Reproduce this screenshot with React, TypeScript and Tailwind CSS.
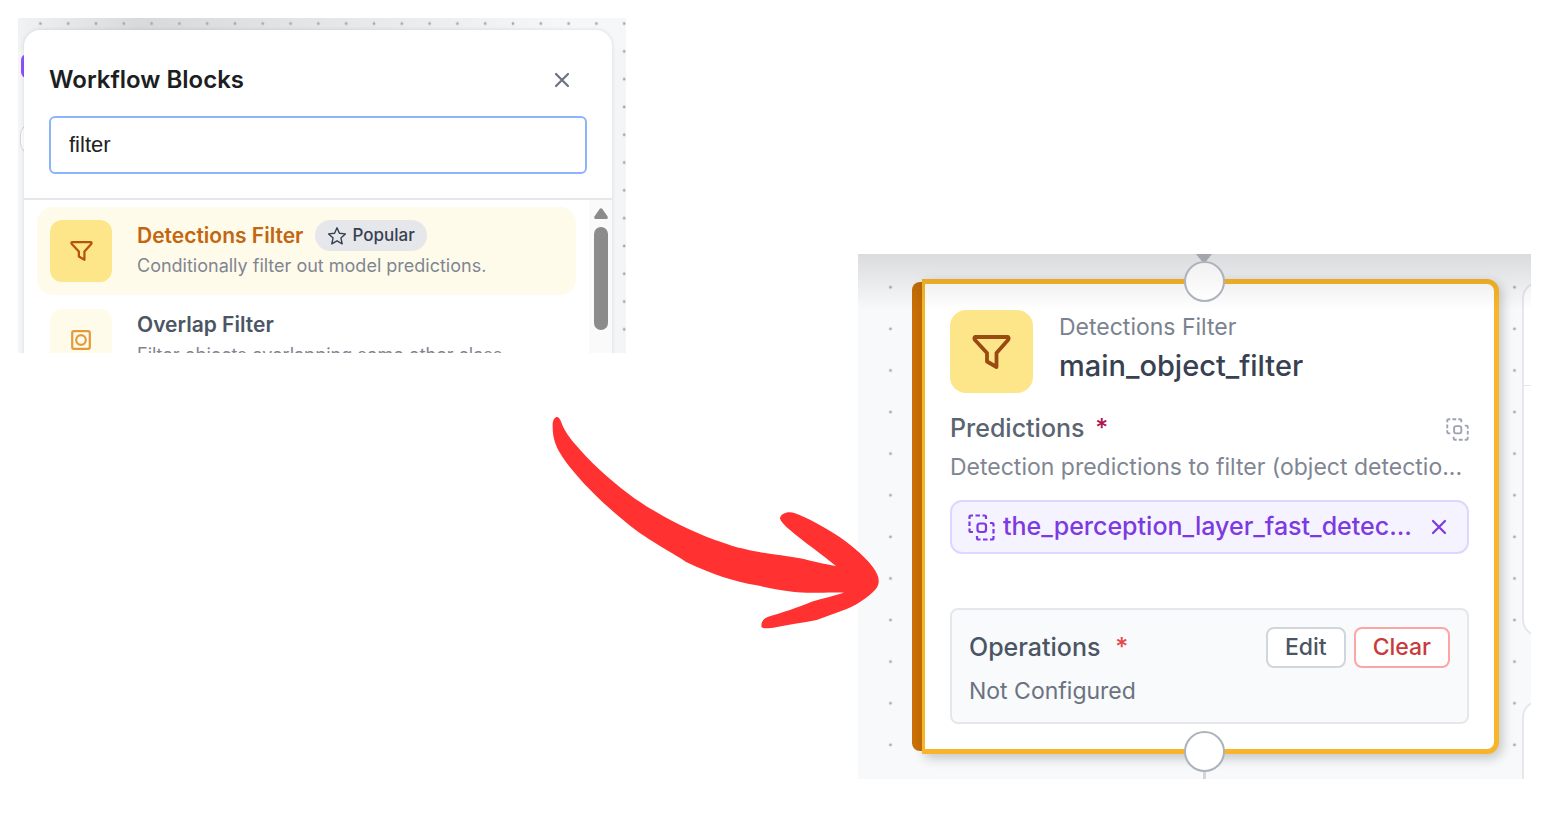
import { useState } from "react";

interface Block {
  name: string;
  description: string;
  popular: boolean;
  active: boolean;
}

const BLOCKS: Block[] = [
  {
    name: "Detections Filter",
    description: "Conditionally filter out model predictions.",
    popular: true,
    active: true,
  },
  {
    name: "Overlap Filter",
    description: "Filter objects overlapping some other class.",
    popular: false,
    active: false,
  },
];

export default function App() {
  return (
    <main className="relative min-h-screen bg-white font-['Inter',sans-serif]">
      <div className="grid grid-cols-[608fr_232fr_673fr] items-start pt-[18px] pr-[27px] pl-[18px]">
        <BlockSearch />
        <div />
        <FilterNode />
      </div>
      <FlowArrow />
    </main>
  );
}

/* Block picker */
function BlockSearch() {
  const [query, setQuery] = useState("filter");

  return (
    <section className="relative h-[335px] overflow-hidden bg-[#f4f5f7] pt-3 pr-[14px] pl-[6px]">
      <div className="absolute inset-x-0 top-0 h-8 bg-linear-to-r from-[#f1f2f4] via-[#d8d9da] via-20% to-[#f6f7f9] to-90%" />
      <DotGrid id="picker-dots" step={27.8} x={8.5} y={19.5} />
      <div className="absolute top-[36px] left-[3px] h-6 w-3 rounded-full bg-violet-500" />
      <div className="absolute top-[105px] left-[2px] h-8 w-6 rounded-full border border-gray-300 bg-white" />

      <div className="relative h-[400px] overflow-hidden rounded-2xl bg-white shadow-[0_0_4px_rgba(0,0,0,0.12)]">
        <header className="px-[25px] pt-8 pb-6">
          <div className="flex h-9 items-center justify-between">
            <h2 className="text-2xl font-semibold text-[#1c1e22]">Workflow Blocks</h2>
            <button aria-label="Close" className="mr-[17px] text-[#6b7280]">
              <Cross className="size-4" />
            </button>
          </div>
          <input
            type="text"
            aria-label="Search blocks"
            value={query}
            onChange={(e) => setQuery(e.target.value)}
            className="mt-[18px] block h-[58px] w-full rounded-md border-2 border-[#8cb4fa] bg-white px-[18px] font-['Liberation_Sans',sans-serif] text-[22px] text-[#222] outline-none"
          />
        </header>

        <div className="flex border-t-2 border-gray-200">
          <ul className="flex-1 space-y-px px-[13px] pt-[7px]">
            {BLOCKS.map((b) => (
              <BlockRow key={b.name} block={b} />
            ))}
          </ul>
          <div className="flex w-[23px] flex-col items-center bg-[#fafafa] pt-2">
            <svg viewBox="0 0 14 11" className="h-[11px] w-[14px] fill-[#8b8b8b]">
              <path d="M5.8 .8Q7-.4 8.200 .8L13.600 8.500Q14.200 11 12.500 11H1.500Q-.2 11 .4 8.500Z" />
            </svg>
            <div className="mt-2 h-[103px] w-[14px] rounded-full bg-[#8b8b8b]" />
          </div>
        </div>
      </div>
    </section>
  );
}

function BlockRow({ block }: { block: Block }) {
  return (
    <li className={block.active ? "rounded-2xl bg-amber-50" : "rounded-2xl"}>
      <button className="flex w-full items-start gap-[25px] p-[13px] text-left">
        <span
          className={
            block.active
              ? "flex size-[62px] shrink-0 items-center justify-center rounded-xl bg-[#fde68a] text-[#b45309]"
              : "flex size-[62px] shrink-0 items-center justify-center rounded-xl bg-amber-50 text-[#e39a3b]"
          }
        >
          {block.active ? <Funnel className="h-5 w-[23px]" /> : <OverlapIcon />}
        </span>
        <span className="min-w-0 whitespace-nowrap">
          <span className="flex h-[31px] items-center gap-3">
            <span
              className={
                block.active
                  ? "text-[21px] font-semibold text-[#c2660f]"
                  : "text-[21px] font-semibold text-[#4b5563]"
              }
            >
              {block.name}
            </span>
            {block.popular && (
              <span className="flex h-[31px] items-center gap-[5px] rounded-full bg-gray-200 px-3 text-[17px] font-medium text-[#374151]">
                <Star />
                Popular
              </span>
            )}
          </span>
          <span className="block text-lg leading-[30px] text-[#7f8692]">{block.description}</span>
        </span>
      </button>
    </li>
  );
}

/* Node on the workflow canvas */
function FilterNode() {
  return (
    <section className="relative mt-[236px] overflow-hidden bg-[#f8f9fb] pt-[25px] pr-8 pb-[25px] pl-[54px]">
      <DotGrid id="node-dots" step={41.6} x={11.7} y={12.5} />

      {/* neighbouring nodes */}
      <div className="absolute top-[28px] -right-10 h-[354px] w-[49px] rounded-2xl border-2 border-gray-200 bg-white" />
      <div className="absolute top-[131px] right-0 h-px w-[9px] bg-gray-200" />
      <div className="absolute top-[447px] -right-10 h-[100px] w-[49px] rounded-2xl border-2 border-gray-200 bg-white" />

      <div className="relative flex">
        <div className="my-[3px] w-[10px] rounded-l-lg bg-[#c97006]" />
        <article className="min-w-0 flex-1 rounded-r-xl border-[5px] border-l-[3px] border-[#f8b529] bg-white px-[25px] pt-[26px] pb-[25px] shadow-[3px_4px_12px_rgba(0,0,0,0.22)]">
          <header className="flex items-start gap-[26px]">
            <div className="flex size-[83px] items-center justify-center rounded-2xl bg-[#fde68a] text-[#9a4a10]">
              <Funnel className="h-[34px] w-[39px]" />
            </div>
            <div>
              <p className="text-[23px] leading-[34px] text-[#7b828f]">Detections Filter</p>
              <h2 className="text-[29px] leading-[44px] font-medium text-[#374151]">main_object_filter</h2>
            </div>
          </header>

          <div className="mt-[18px] flex h-9 items-center justify-between">
            <h3 className="text-[25px] font-medium text-[#5b6471]">
              Predictions <span className="ml-1 text-[#b01450]">*</span>
            </h3>
            <DashedSquares className="size-[23px] text-[#9ca3af]" />
          </div>
          <p className="text-[23px] leading-[40px] whitespace-nowrap text-[#7f8692]">
            Detection predictions to filter (object detectio...
          </p>

          <div className="mt-[13px] flex h-[54px] items-center rounded-xl border-2 border-violet-200 bg-violet-50 px-4 text-[#7c3ae0]">
            <DashedSquares className="size-[27px] shrink-0" />
            <span className="ml-2 text-[25px] font-medium whitespace-nowrap">the_perception_layer_fast_detec...</span>
            <button aria-label="Remove" className="mr-1 ml-auto">
              <Cross className="size-4" />
            </button>
          </div>

          <div className="mt-[54px] h-[116px] rounded-lg border-2 border-gray-200 bg-gray-50 px-[17px] py-[17px]">
            <div className="flex h-[41px] items-center">
              <h3 className="text-[25px] font-medium text-[#4b5563]">
                Operations <span className="ml-2 text-[#e5484d]">*</span>
              </h3>
              <button className="ml-auto h-[41px] rounded-lg border-2 border-gray-300 bg-white px-[17px] text-[23px] font-medium text-[#4b5563]">
                Edit
              </button>
              <button className="ml-2 h-[41px] rounded-lg border-2 border-[#fca5a5] bg-white px-[17px] text-[23px] font-medium text-[#c93a3a]">
                Clear
              </button>
            </div>
            <p className="mt-1 text-[23px] leading-[38px] text-[#6b7280]">Not Configured</p>
          </div>
        </article>
      </div>

      {/* shadow of the toolbar above */}
      <div className="absolute inset-x-0 top-0 h-[56px] bg-linear-to-b from-black/12 to-transparent" />

      {/* connection handles */}
      <svg viewBox="0 0 20 12" className="absolute top-0 left-[336px] h-3 w-5 fill-[#a3a7ad]">
        <path d="M2 0H18L10 10Z" />
      </svg>
      <div className="absolute top-[7px] left-[326px] size-[41px] rounded-full border-2 border-[#adb2bc] bg-linear-to-b from-[#f1f1f1] to-white" />
      <div className="absolute bottom-0 left-[345px] h-2 w-[3px] bg-gray-300" />
      <div className="absolute bottom-[7px] left-[326px] size-[41px] rounded-full border-2 border-[#adb2bc] bg-white" />
    </section>
  );
}

function DotGrid({ id, step, x, y }: { id: string; step: number; x: number; y: number }) {
  return (
    <svg className="absolute inset-0 h-full w-full" aria-hidden="true">
      <pattern id={id} x={x} y={y} width={step} height={step} patternUnits="userSpaceOnUse">
        <circle cx={step / 2} cy={step / 2} r="1.4" fill="#a5a8ae" />
      </pattern>
      <rect width="100%" height="100%" fill={`url(#${id})`} />
    </svg>
  );
}

function FlowArrow() {
  return (
    <svg
      viewBox="0 0 1050 720"
      className="absolute top-[400px] left-[34.66%] h-[240px] w-[350px] fill-[#ff3131]"
      aria-hidden="true"
    >
      <path d="M50 51C42 53 37 64 38 80C38 110 45 135 62 162C100 225 200 325 290 392C350 435 430 477 440 487C520 524 580 545 650 556C720 572 760 577 800 578C850 579 890 577 912 578C880 588 850 594 815 605C780 620 720 640 685 650C668 655 662 670 665 682C670 686 680 685 700 683C740 675 790 668 830 660C860 650 890 637 920 627C960 610 1000 580 1012 560C1018 550 1017 535 1012 524C1000 495 960 455 900 412C850 380 800 352 765 340C745 332 722 340 720 355C722 365 735 378 750 390C790 424 850 467 888 498C850 492 820 484 780 475C720 465 650 458 605 445C570 438 560 430 525 420C430 385 330 330 270 285C200 232 150 185 105 132C85 110 70 85 65 70C60 55 55 51 50 51Z" />
    </svg>
  );
}

function Funnel({ className }: { className: string }) {
  return (
    <svg viewBox="0 0 39 34" className={className} fill="none" stroke="currentColor" strokeWidth="3.800" strokeLinejoin="round">
      <path d="M3 2H36Q37.200 3.500 36 5L24.500 18V32L15 26.500V18L3 5Q1.800 3.500 3 2Z" />
    </svg>
  );
}

function Cross({ className }: { className: string }) {
  return (
    <svg viewBox="0 0 16 16" className={className} fill="none" stroke="currentColor" strokeWidth="2.200" strokeLinecap="round">
      <path d="M2 2L14 14M14 2L2 14" />
    </svg>
  );
}

function Star() {
  return (
    <svg viewBox="0 0 20 20" className="size-5" fill="none" stroke="currentColor" strokeWidth="1.400" strokeLinejoin="round">
      <path d="M10 1.800L12.400 7.300L18.400 7.900L13.900 11.900L15.200 17.900L10 14.800L4.800 17.900L6.100 11.900L1.600 7.900L7.600 7.300Z" />
    </svg>
  );
}

function OverlapIcon() {
  return (
    <svg viewBox="0 0 20 20" className="size-5" fill="none" stroke="currentColor" strokeWidth="2.200">
      <rect x="1.200" y="1.200" width="17.600" height="17.600" rx="1.800" />
      <circle cx="10" cy="10" r="4.800" />
    </svg>
  );
}

function DashedSquares({ className }: { className: string }) {
  return (
    <svg viewBox="0 0 27 27" className={className} fill="none" stroke="currentColor" strokeWidth="2.200">
      <path d="M1.500 5V3Q1.500 1.500 3 1.500H5M7.500 1.500H12M14.500 1.500H16.500Q18 1.500 18 3V5M1.500 7.500V12M1.500 14.500V16.500Q1.500 18 3 18H5" />
      <path d="M22 9H24Q25.500 9 25.500 10.500V12.500M25.500 15V19.500M25.500 22V24Q25.500 25.500 24 25.500H22M19.500 25.500H15M12.500 25.500H10.500Q9 25.500 9 24V22" />
      <rect x="9.500" y="9.500" width="8.500" height="8.500" rx="2.500" />
    </svg>
  );
}
